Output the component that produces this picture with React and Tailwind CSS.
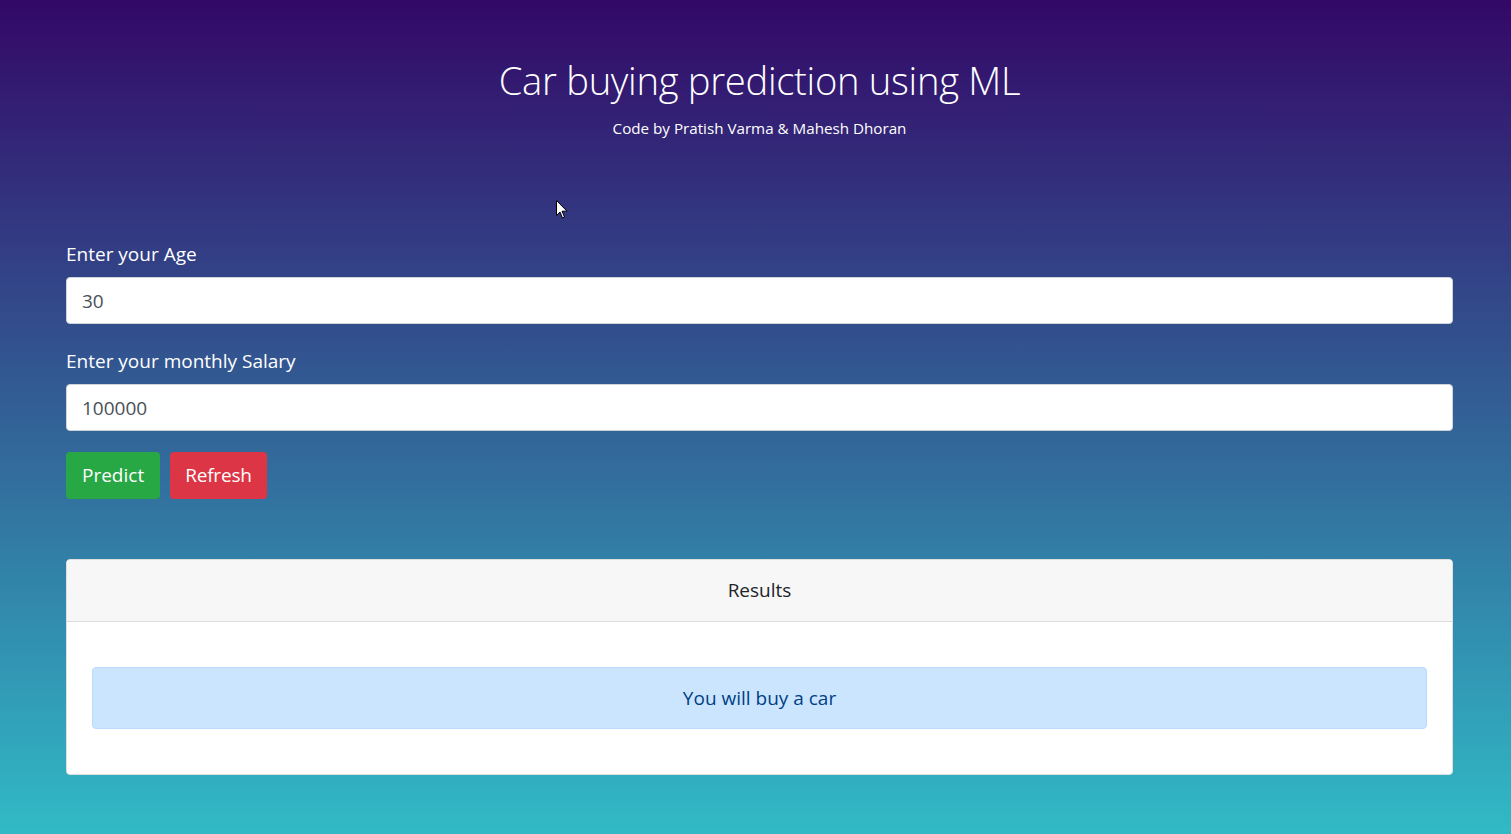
export default function App() {
  return (
    <div
      className="relative min-h-screen w-full bg-[linear-gradient(to_bottom,#330867,#31bac6)] text-white"
      style={{ fontFamily: '"Open Sans", "Noto Sans", sans-serif' }}
    >
      <div className="ml-[66px] mr-[58px] pt-[56px] pb-[59px]">
        <header className="text-center">
          <h1 className="text-[38.2px] font-light leading-[48px] tracking-[-0.3px]">Car buying prediction using ML</h1>
          <p className="mt-[13px] text-[15.2px] leading-[22px]">Code by Pratish Varma &amp; Mahesh Dhoran</p>
        </header>

        <form className="mt-[100px]" onSubmit={(e) => e.preventDefault()}>
          <div className="mb-[22px]">
            <label className="block text-[19px] leading-[30px] pb-[8px]">Enter your Age</label>
            <input
              type="text"
              defaultValue="30"
              className="block w-full h-[47px] px-[15px] text-[19px] text-[#495057] bg-white border border-[#ced4da] rounded-[4px] outline-none"
            />
          </div>
          <div>
            <label className="block text-[19px] leading-[30px] pb-[8px]">Enter your monthly Salary</label>
            <input
              type="text"
              defaultValue="100000"
              className="block w-full h-[47px] px-[15px] text-[19px] text-[#495057] bg-white border border-[#ced4da] rounded-[4px] outline-none"
            />
          </div>
          <div className="mt-[21px] flex gap-[10px]">
            <button className="h-[47px] px-[16px] text-[19px] text-white bg-[#28a745] rounded-[4px]">Predict</button>
            <button className="h-[47px] px-[15px] text-[19px] text-white bg-[#dc3545] rounded-[4px] tracking-[-0.2px]">Refresh</button>
          </div>
        </form>

        <div className="mt-[60px] bg-white border border-[#dfdfdf] rounded-[4px] overflow-hidden">
          <div className="h-[62px] flex items-center justify-center bg-[#f7f7f7] border-b border-[#dcdcdc] text-[19px] text-[#212529]">
            Results
          </div>
          <div className="px-[25px] py-[45px]">
            <div className="h-[62px] flex items-center justify-center bg-[#cce5ff] border border-[#b8daff] rounded-[4px] text-[19px] text-[#004085]">
              You will buy a car
            </div>
          </div>
        </div>
      </div>

      <svg className="absolute left-[556px] top-[200px]" width="12" height="19" viewBox="0 0 12 19">
        <path d="M0.5 0.5 L0.5 15.5 L4 12 L6.5 18 L8.5 17 L6 11.2 L11 11.2 Z" fill="#fff" stroke="#000" strokeWidth="1" />
      </svg>
    </div>
  );
}
